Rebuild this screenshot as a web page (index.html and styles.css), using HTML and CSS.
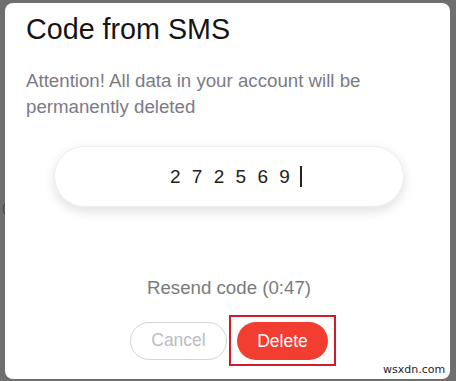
FILE: index.html
```html
<!DOCTYPE html>
<html>
<head>
<meta charset="utf-8">
<link rel="stylesheet" href="styles.css">
</head>
<body>
<span class="behind">(</span>
<div class="card">
  <h1 class="title">Code from SMS</h1>
  <p class="warn">Attention! All data in your account will be<br>permanently deleted</p>
  <div class="code-field">
    <span class="digits">272569</span><span class="cursor"></span>
  </div>
  <div class="resend">Resend code (0:47)</div>
  <div class="actions">
    <button class="btn cancel">Cancel</button>
    <div class="highlight">
      <button class="btn delete">Delete</button>
    </div>
  </div>
</div>
<span class="watermark">wsxdn.com</span>
</body>
</html>
```
FILE: styles.css
```css
html, body {
  margin: 0;
  padding: 0;
}
body {
  background: #6f6f6f;
  width: 456px;
  height: 381px;
  overflow: hidden;
  padding-top: 3px;
  box-sizing: border-box;
  font-family: "Liberation Sans", Arial, sans-serif;
}
.behind {
  position: absolute;
  left: 2px;
  top: 200px;
  font-size: 13px;
  color: #444;
}
.card {
  position: relative;
  margin-left: 5px;
  width: 445px;
  height: 376px;
  background: #fff;
  border-radius: 8px;
  box-sizing: border-box;
  padding-top: 10px;
  display: flex;
  flex-direction: column;
}
.title {
  margin: 0 0 0 21px;
  font-size: 28.7px;
  line-height: 32px;
  font-weight: normal;
  color: #151515;
}
.warn {
  margin: 23px 0 0 21px;
  font-size: 18.7px;
  line-height: 26px;
  color: #7a7b86;
}
.code-field {
  margin: 26px 0 0 49px;
  width: 350px;
  height: 61px;
  box-sizing: border-box;
  border-radius: 31px;
  border: 1px solid #ececec;
  box-shadow: 0 4px 12px rgba(0, 0, 0, 0.13);
  display: flex;
  align-items: center;
  padding-left: 115px;
}
.digits {
  font-size: 19px;
  letter-spacing: 11.3px;
  color: #222;
}
.cursor {
  display: inline-block;
  width: 1.5px;
  height: 21px;
  background: #222;
  margin-left: -1px;
}
.resend {
  margin-top: 68px;
  padding-left: 3px;
  text-align: center;
  font-size: 18.7px;
  line-height: 26px;
  color: #7b7b7b;
}
.actions {
  margin: 14px 0 0 125px;
  display: flex;
  align-items: center;
  gap: 2px;
}
.btn {
  font-family: "Liberation Sans", Arial, sans-serif;
  font-size: 17.5px;
  height: 38px;
  border-radius: 19px;
  padding: 0;
  cursor: pointer;
}
.cancel {
  width: 97px;
  background: #fff;
  border: 1px solid #d2d5da;
  color: #b9bdc4;
}
.highlight {
  border: 2px solid #d31a2b;
  padding: 5px 6px 4px;
  display: flex;
}
.delete {
  width: 91px;
  border: none;
  background: #f23d31;
  color: #fff;
}
.watermark {
  position: absolute;
  left: 383px;
  top: 363px;
  font-family: "DejaVu Sans", Verdana, sans-serif;
  font-size: 11px;
  color: #1e1e1e;
}
```
